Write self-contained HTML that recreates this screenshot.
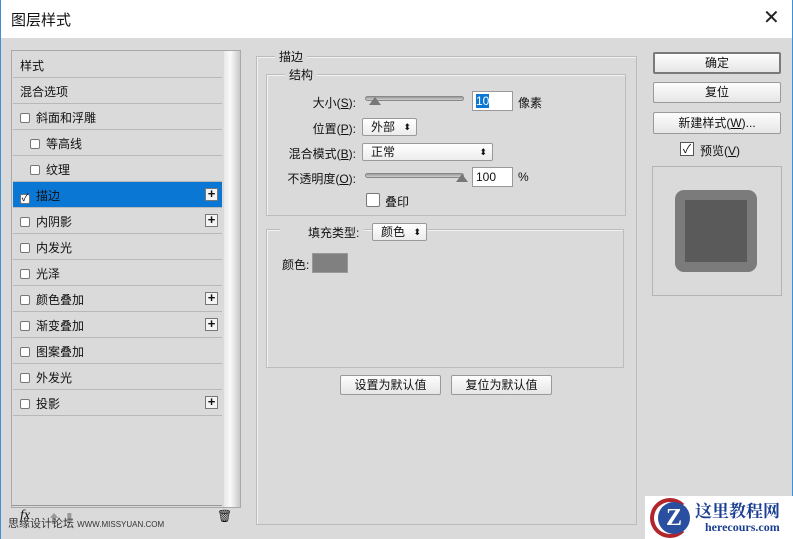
<!DOCTYPE html>
<html><head><meta charset="utf-8"><style>
*{box-sizing:border-box;margin:0;padding:0}
body{width:793px;height:539px;overflow:hidden;background:#dadada;font-family:"Liberation Sans","Noto Sans CJK SC",sans-serif;font-size:12px;color:#111;position:relative}
.a{position:absolute}
.title{left:0;top:0;width:793px;height:38px;background:#fff;border-left:1px solid #3c8fd8;border-right:1px solid #3c8fd8}
.title span{position:absolute;left:10px;top:9px;font-size:15px}
.row{position:absolute;left:13px;width:209px;height:26px;border-bottom:1px solid #b8b8b8;line-height:28px;padding-left:7px}
.cb{display:inline-block;width:10px;height:10px;border:1px solid #777;background:#fff;border-radius:2px;vertical-align:-1px;margin-right:6px}
.plus{position:absolute;right:4px;top:6px;width:13px;height:13px;border:1px solid #777;background:#f4f4f4;font-size:13px;line-height:10px;text-align:center;font-weight:bold}
.fs{border:1px solid #bcbcbc;box-shadow:inset 1px 1px 0 #f2f2f2}
.lg{position:absolute;background:#dadada;padding:0 4px;font-size:12px}
.btn{position:absolute;border:1px solid #9a9a9a;border-radius:2px;background:linear-gradient(#fdfdfd,#e6e6e6);text-align:center;font-size:12px}
.sel{position:absolute;border:1px solid #9a9a9a;border-radius:2px;background:linear-gradient(#fff,#ececec);padding-left:8px;line-height:17px}
.sel:after{content:"⬍";position:absolute;right:5px;top:0;font-size:9px}
.lab{position:absolute;text-align:right;width:100px}
.track{position:absolute;height:5px;border-radius:3px;background:linear-gradient(#9a9a9a,#d0d0d0);border:1px solid #888}
.thumb{position:absolute;width:0;height:0;border-left:6px solid transparent;border-right:6px solid transparent;border-bottom:8px solid #777}
.inp{position:absolute;background:#fff;border:1px solid #999;height:20px;line-height:18px;padding-left:3px}
</style></head><body>
<div class="a title"><span>图层样式</span><span style="left:762px;top:5px;font-size:20px;color:#222">✕</span></div>
<div class="a" style="left:0;top:38px;width:1px;height:501px;background:#3c8fd8"></div>
<div class="a" style="left:792px;top:38px;width:1px;height:501px;background:#3c8fd8"></div>

<div class="a" style="left:11px;top:50px;width:230px;height:458px;border:1px solid #a8a8a8"></div>
<div class="a" style="left:224px;top:51px;width:16px;height:456px;background:linear-gradient(90deg,#e8e8e8,#fafafa 40%,#c8c8c8)"></div>
<div class="row" style="top:52px">样式</div>
<div class="row" style="top:78px">混合选项</div>
<div class="row" style="top:104px"><span class="cb"></span>斜面和浮雕</div>
<div class="row" style="top:130px;padding-left:17px"><span class="cb"></span>等高线</div>
<div class="row" style="top:156px;padding-left:17px"><span class="cb"></span>纹理</div>
<div class="row" style="top:182px;background:#0a77d4;color:#fff"><span class="cb" style="color:#000;font-size:10px;line-height:8px;text-align:center">✓</span><span style="color:#111">描边</span><span class="plus" style="color:#111">+</span></div>
<div class="row" style="top:208px"><span class="cb"></span>内阴影<span class="plus">+</span></div>
<div class="row" style="top:234px"><span class="cb"></span>内发光</div>
<div class="row" style="top:260px"><span class="cb"></span>光泽</div>
<div class="row" style="top:286px"><span class="cb"></span>颜色叠加<span class="plus">+</span></div>
<div class="row" style="top:312px"><span class="cb"></span>渐变叠加<span class="plus">+</span></div>
<div class="row" style="top:338px"><span class="cb"></span>图案叠加</div>
<div class="row" style="top:364px"><span class="cb"></span>外发光</div>
<div class="row" style="top:390px"><span class="cb"></span>投影<span class="plus">+</span></div>
<div class="a" style="left:12px;top:505px;width:210px;height:1px;background:#999"></div>
<div class="a" style="left:20px;top:508px;font-style:italic;font-family:'Liberation Serif',serif;font-size:14px">fx</div>
<div class="a" style="left:48px;top:510px;color:#999;font-size:12px">⬆ ⬇</div>
<div class="a" style="left:8px;top:515px;font-size:11px;color:#333">思缘设计论坛 <span style="font-size:8px">WWW.MISSYUAN.COM</span></div>
<div class="a" style="left:217px;top:509px;font-size:12px">🗑</div>

<div class="a fs" style="left:256px;top:56px;width:381px;height:469px"></div>
<div class="lg" style="left:275px;top:48px">描边</div>
<div class="a fs" style="left:266px;top:74px;width:360px;height:142px"></div>
<div class="lg" style="left:285px;top:66px">结构</div>
<div class="lab" style="left:256px;top:94px">大小(<u>S</u>):</div>
<div class="track" style="left:365px;top:96px;width:99px"></div>
<div class="thumb" style="left:369px;top:97px"></div>
<div class="inp" style="left:472px;top:91px;width:41px"><span style="background:#0a77d4;color:#fff">10</span></div>
<div class="a" style="left:518px;top:94px">像素</div>
<div class="lab" style="left:256px;top:120px">位置(<u>P</u>):</div>
<div class="sel" style="left:362px;top:118px;width:55px;height:18px">外部</div>
<div class="lab" style="left:256px;top:145px">混合模式(<u>B</u>):</div>
<div class="sel" style="left:362px;top:143px;width:131px;height:18px">正常</div>
<div class="lab" style="left:256px;top:170px">不透明度(<u>O</u>):</div>
<div class="track" style="left:365px;top:173px;width:99px"></div>
<div class="thumb" style="left:456px;top:174px"></div>
<div class="inp" style="left:472px;top:167px;width:41px">100</div>
<div class="a" style="left:518px;top:170px">%</div>
<div class="a" style="left:366px;top:193px;width:14px;height:14px;border:1px solid #777;background:#fff;border-radius:2px"></div>
<div class="a" style="left:385px;top:193px">叠印</div>

<div class="a fs" style="left:266px;top:229px;width:358px;height:139px"></div>
<div class="lg" style="left:280px;top:224px;padding:0 5px 0 28px">填充类型:</div>
<div class="sel" style="left:372px;top:223px;width:55px;height:18px">颜色</div>
<div class="a" style="left:282px;top:256px">颜色:</div>
<div class="a" style="left:312px;top:253px;width:36px;height:20px;background:#808080;border:1px solid #999"></div>
<div class="btn" style="left:340px;top:375px;width:101px;height:20px;line-height:18px">设置为默认值</div>
<div class="btn" style="left:451px;top:375px;width:101px;height:20px;line-height:18px">复位为默认值</div>

<div class="btn" style="left:653px;top:52px;width:128px;height:22px;line-height:19px;border:2px solid #7a7a7a">确定</div>
<div class="btn" style="left:653px;top:82px;width:128px;height:21px;line-height:19px">复位</div>
<div class="btn" style="left:653px;top:112px;width:128px;height:22px;line-height:20px">新建样式(<u>W</u>)...</div>
<div class="a" style="left:680px;top:142px;width:14px;height:14px;border:1px solid #555;background:#fff;font-size:12px;line-height:12px;text-align:center">✓</div>
<div class="a" style="left:700px;top:142px">预览(<u>V</u>)</div>
<div class="a" style="left:652px;top:166px;width:130px;height:130px;border:1px solid #b4b4b4"></div>
<div class="a" style="left:675px;top:190px;width:82px;height:82px;background:#7b7b7b;border-radius:9px"></div>
<div class="a" style="left:685px;top:200px;width:62px;height:62px;background:#5a5a5a"></div>

<div class="a" style="left:645px;top:496px;width:148px;height:43px;background:#fff"></div>
<div class="a" style="left:650px;top:498px;width:40px;height:40px;border-radius:50%;border:4px solid #b1252b;border-right-color:transparent"></div>
<div class="a" style="left:658px;top:502px;width:32px;height:32px;border-radius:50%;background:#2a4fa0;color:#fff;font-weight:bold;font-size:24px;text-align:center;line-height:32px;font-family:'Liberation Serif',serif">Z</div>
<div class="a" style="left:695px;top:497px;font-size:17px;font-weight:bold;color:#1b3f92;font-family:'Liberation Serif','Noto Serif CJK SC',serif">这里教程网</div>
<div class="a" style="left:705px;top:520px;font-size:12px;font-weight:bold;color:#1b3f92;font-family:'Liberation Serif',serif">herecours.com</div>
</body></html>
